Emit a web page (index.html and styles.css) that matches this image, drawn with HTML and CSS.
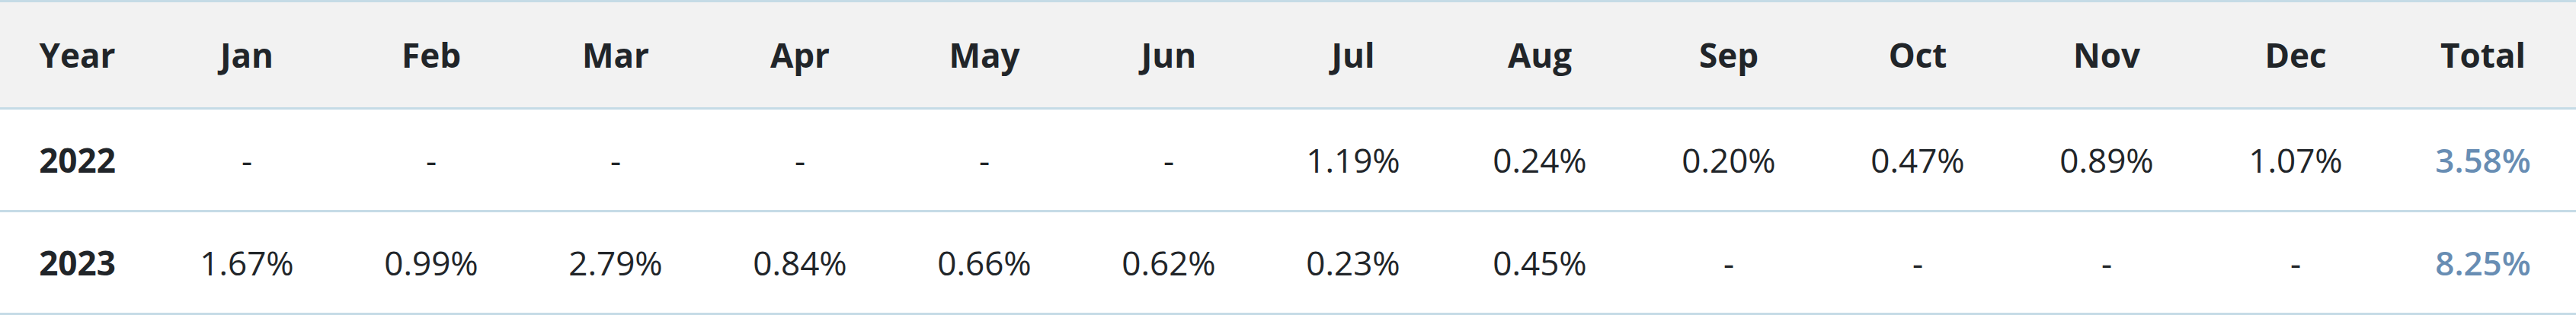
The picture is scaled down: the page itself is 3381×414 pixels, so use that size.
FILE: index.html
```html
<!DOCTYPE html>
<html lang="en">
<head>
<meta charset="utf-8">
<title>Monthly returns</title>
<link rel="stylesheet" href="styles.css">
</head>
<body>
<div class="returns" role="table">
  <div class="row head" role="row">
    <div class="cell" role="columnheader">Year</div>
    <div class="cell" role="columnheader">Jan</div>
    <div class="cell" role="columnheader">Feb</div>
    <div class="cell" role="columnheader">Mar</div>
    <div class="cell" role="columnheader">Apr</div>
    <div class="cell" role="columnheader">May</div>
    <div class="cell" role="columnheader">Jun</div>
    <div class="cell" role="columnheader">Jul</div>
    <div class="cell" role="columnheader">Aug</div>
    <div class="cell" role="columnheader">Sep</div>
    <div class="cell" role="columnheader">Oct</div>
    <div class="cell" role="columnheader">Nov</div>
    <div class="cell" role="columnheader">Dec</div>
    <div class="cell" role="columnheader">Total</div>
  </div>
  <div class="row" role="row">
    <div class="cell year" role="rowheader">2022</div>
    <div class="cell" role="cell">-</div>
    <div class="cell" role="cell">-</div>
    <div class="cell" role="cell">-</div>
    <div class="cell" role="cell">-</div>
    <div class="cell" role="cell">-</div>
    <div class="cell" role="cell">-</div>
    <div class="cell" role="cell">1.19%</div>
    <div class="cell" role="cell">0.24%</div>
    <div class="cell" role="cell">0.20%</div>
    <div class="cell" role="cell">0.47%</div>
    <div class="cell" role="cell">0.89%</div>
    <div class="cell" role="cell">1.07%</div>
    <div class="cell total" role="cell">3.58%</div>
  </div>
  <div class="row" role="row">
    <div class="cell year" role="rowheader">2023</div>
    <div class="cell" role="cell">1.67%</div>
    <div class="cell" role="cell">0.99%</div>
    <div class="cell" role="cell">2.79%</div>
    <div class="cell" role="cell">0.84%</div>
    <div class="cell" role="cell">0.66%</div>
    <div class="cell" role="cell">0.62%</div>
    <div class="cell" role="cell">0.23%</div>
    <div class="cell" role="cell">0.45%</div>
    <div class="cell" role="cell">-</div>
    <div class="cell" role="cell">-</div>
    <div class="cell" role="cell">-</div>
    <div class="cell" role="cell">-</div>
    <div class="cell total" role="cell">8.25%</div>
  </div>
</div>
</body>
</html>
```

FILE: styles.css
```css
* { box-sizing: border-box; }

html, body {
  margin: 0;
  padding: 0;
  background: #ffffff;
}

.returns {
  width: 100%;
  font-family: "Open Sans", "Noto Sans", Arial, sans-serif;
  font-size: 44px;
  color: #212529;
}

.row {
  display: grid;
  grid-template-columns: 203fr repeat(7, 242fr) repeat(5, 248fr) 244fr;
  height: 135px;
  border-bottom: 3px solid #c5dbe6;
}

.row.head {
  height: 144px;
  border-top: 3px solid #c5dbe6;
  background: #f2f2f2;
  font-weight: 700;
}

.cell {
  display: flex;
  align-items: center;
  justify-content: center;
  white-space: nowrap;
}

.year {
  font-weight: 700;
}

.total {
  color: #688db3;
  font-weight: 600;
}
```
